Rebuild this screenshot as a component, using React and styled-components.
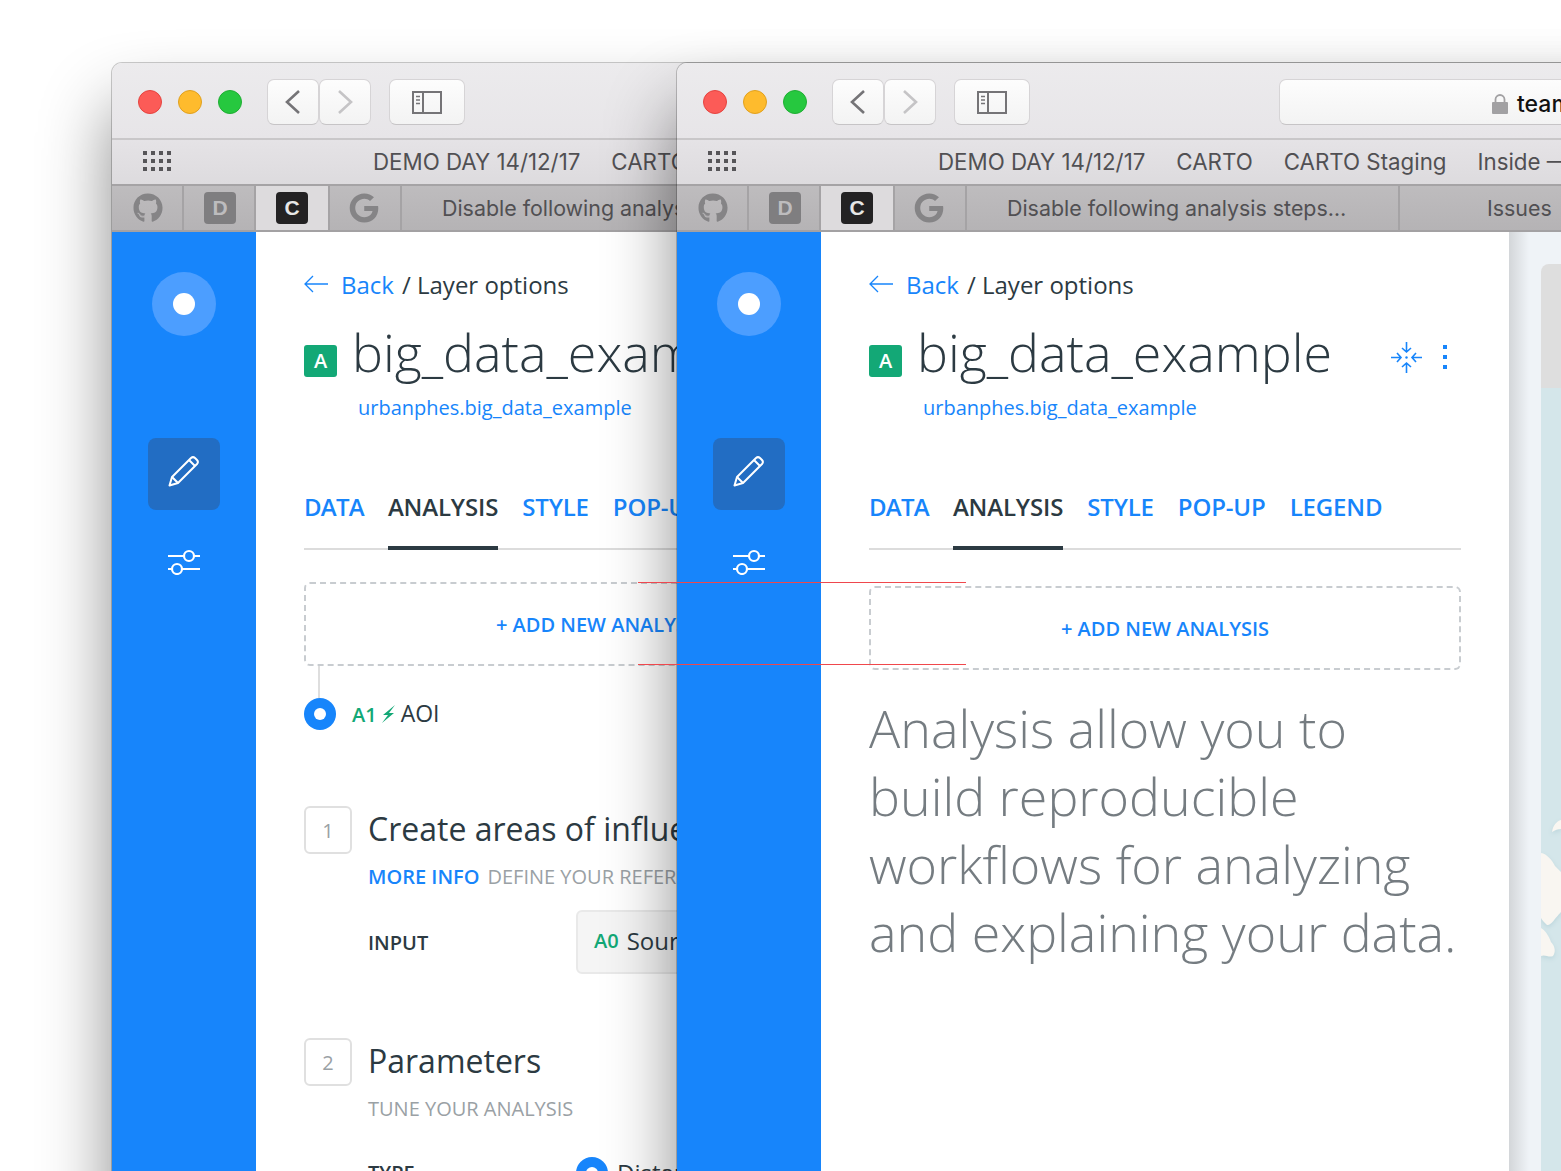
import React from "react";
import styled, { createGlobalStyle } from "styled-components";
import { FaGithub, FaGoogle } from "react-icons/fa";

const Global = createGlobalStyle`
  html, body { margin: 0; padding: 0; background: #fff; overflow: hidden; }
  * { box-sizing: border-box; }
`;

const BLUE = "#1785fb";
const DARK = "#2c3a42";
const GREEN = "#13a876";
const MUTED = "#9aa1a5";

const Stage = styled.div`
  position: relative;
  width: 1561px;
  height: 1171px;
  overflow: hidden;
  background: #fff;
  font-family: "Open Sans", sans-serif;
`;

const Win = styled.section`
  position: absolute;
  left: ${p => p.$left}px;
  top: 63px;
  width: 1600px;
  height: 1180px;
  display: flex;
  flex-direction: column;
  border-radius: 10px 10px 0 0;
  background: #fff;
  box-shadow: 0 44px 70px rgba(0, 0, 0, 0.46), 0 0 0 1px rgba(0, 0, 0, 0.2);
  overflow: hidden;
`;

const Toolbar = styled.div`
  height: 77px;
  flex: none;
  display: flex;
  align-items: flex-start;
  padding: 16px 0 0 26px;
  background: linear-gradient(#ecebed, #e7e5e8);
  border-bottom: 2px solid #c9c7c9;
`;

const Lights = styled.div`
  display: flex;
  gap: 16px;
  margin-top: 11px;
  margin-right: 25px;
`;

const Light = styled.span`
  width: 24px;
  height: 24px;
  border-radius: 50%;
  background: ${p => p.$fill};
  border: 1px solid ${p => p.$edge};
`;

const ToolBtn = styled.button`
  width: ${p => p.$w}px;
  height: 46px;
  flex: none;
  margin-right: ${p => p.$mr || 0}px;
  padding: 0;
  display: flex;
  align-items: center;
  justify-content: center;
  background: linear-gradient(#fdfdfd, #f3f3f3);
  border: 1px solid #d6d4d6;
  border-bottom-color: #c6c4c6;
  border-radius: 7px;
`;

const UrlBar = styled.div`
  width: 500px;
  height: 46px;
  flex: none;
  display: flex;
  align-items: center;
  padding: 3px 0 0 212px;
  gap: 9px;
  background: linear-gradient(#fdfdfd, #f3f3f3);
  border: 1px solid #d6d4d6;
  border-bottom-color: #c6c4c6;
  border-radius: 7px;
  margin-left: 249px;
  font-family: Inter, sans-serif;
  font-size: 23px;
  font-weight: 500;
  color: #111;
  white-space: nowrap;
`;

const BookmarkBar = styled.div`
  height: 46px;
  flex: none;
  display: flex;
  align-items: center;
  padding: 0 0 2px 31px;
  background: linear-gradient(#e5e3e6, #dddbde);
  border-bottom: 2px solid #a5a3a5;
  font-family: Inter, sans-serif;
  font-size: 22.3px;
  color: #515053;
  white-space: nowrap;
`;

const AppsGrid = styled.span`
  display: grid;
  grid-template-columns: repeat(4, 4px);
  grid-auto-rows: 4px;
  gap: 4px;
  margin-right: 202px;
  i { background: #565558; display: block; }
`;

const Bookmark = styled.span`
  margin-right: 31px;
`;

const TabBar = styled.div`
  height: 46px;
  flex: none;
  display: flex;
  background: linear-gradient(#bebcbe, #b5b3b5);
  border-bottom: 2px solid #a3a1a3;
  font-family: Inter, sans-serif;
  font-size: 21.4px;
  color: #515053;
  white-space: nowrap;
`;

const IconTab = styled.div`
  width: ${p => p.$w}px;
  flex: none;
  display: flex;
  align-items: center;
  justify-content: center;
  padding: ${p => p.$pad || "0"};
  border-right: 2px solid #a5a3a5;
  background: ${p => (p.$active ? "#dddbdd" : "transparent")};
  color: #858486;
  font-size: 30px;
`;

const TextTab = styled.div`
  width: ${p => p.$w}px;
  flex: none;
  display: flex;
  align-items: center;
  padding-left: ${p => p.$pad}px;
  border-right: 2px solid #a5a3a5;
`;

const FavBadge = styled.span`
  width: 32px;
  height: 32px;
  border-radius: 4px;
  display: flex;
  align-items: center;
  justify-content: center;
  background: ${p => p.$bg};
  color: ${p => p.$fg};
  font: 700 21px "Liberation Sans", sans-serif;
`;

const Body = styled.div`
  flex: 1;
  display: flex;
  min-height: 0;
`;

const Sidebar = styled.nav`
  width: 144px;
  flex: none;
  background: ${BLUE};
  display: flex;
  flex-direction: column;
  align-items: center;
  padding-top: 40px;
`;

const Logo = styled.div`
  width: 64px;
  height: 64px;
  border-radius: 50%;
  background: #4c9eff;
  display: flex;
  align-items: center;
  justify-content: center;
  margin-bottom: 102px;
  &::after {
    content: "";
    width: 22px;
    height: 22px;
    border-radius: 50%;
    background: #fff;
  }
`;

const NavItem = styled.div`
  width: 72px;
  height: 72px;
  margin-top: ${p => p.$mt || 0}px;
  border-radius: 8px;
  display: flex;
  align-items: center;
  justify-content: center;
  background: ${p => (p.$active ? "#226dc3" : "transparent")};
`;

const Panel = styled.main`
  width: 688px;
  flex: none;
  padding: 36px 48px 0;
  background: #fff;
`;

const Crumbs = styled.div`
  height: 32px;
  display: flex;
  align-items: center;
  font-size: 24px;
  color: ${DARK};
  white-space: nowrap;
`;

const BackLink = styled.span`
  color: ${BLUE};
  margin: 0 8px 0 13px;
`;

const TitleRow = styled.div`
  height: 72px;
  margin-top: 20px;
  display: flex;
  align-items: center;
  white-space: nowrap;
`;

const LetterBadge = styled.span`
  width: 33px;
  height: 32px;
  flex: none;
  margin-top: 9px;
  border-radius: 3px;
  background: ${GREEN};
  color: #fff;
  font-size: 20px;
  font-weight: 600;
  display: flex;
  align-items: center;
  justify-content: center;
`;

const Title = styled.h1`
  margin: -8px 0 0 15px;
  font-size: 52px;
  line-height: 72px;
  font-weight: 300;
  color: ${DARK};
`;

const TitleActions = styled.div`
  margin-left: auto;
  display: flex;
  align-items: center;
  gap: 21px;
  margin-right: 14px;
  margin-top: 2px;
`;

const Kebab = styled.span`
  display: grid;
  gap: 6px;
  i { width: 4px; height: 4px; background: ${BLUE}; display: block; }
`;

const Subtitle = styled.div`
  margin: 2px 0 0 54px;
  font-size: 20px;
  line-height: 28px;
  color: ${BLUE};
  white-space: nowrap;
`;

const Tabs = styled.div`
  height: 66px;
  margin-top: 62px;
  display: flex;
  gap: 24px;
  border-bottom: 2px solid #dcdcdc;
  white-space: nowrap;
`;

const TabLink = styled.div`
  height: 66px;
  line-height: 46px;
  font-size: 24px;
  font-weight: 600;
  letter-spacing: ${p => p.$track}px;
  color: ${p => (p.$active ? DARK : BLUE)};
  border-bottom: ${p => (p.$active ? `4px solid ${DARK}` : "none")};
`;

const AddBox = styled.div`
  height: 84px;
  margin-top: ${p => p.$mt}px;
  border: 2px dashed #c8ccd0;
  border-radius: 6px;
  display: flex;
  align-items: center;
  justify-content: center;
  font-size: 20px;
  font-weight: 600;
  color: ${BLUE};
  white-space: nowrap;
`;

const Connector = styled.div`
  width: 2px;
  height: 32px;
  margin-left: 14px;
  background: #dedede;
`;

const NodeRow = styled.div`
  height: 32px;
  display: flex;
  align-items: center;
`;

const Radio = styled.span`
  width: 32px;
  height: 32px;
  flex: none;
  border-radius: 50%;
  background: ${BLUE};
  display: flex;
  align-items: center;
  justify-content: center;
  &::after {
    content: "";
    width: 12px;
    height: 12px;
    border-radius: 50%;
    background: #fff;
  }
`;

const NodeCode = styled.span`
  color: ${GREEN};
  font-size: 20px;
  font-weight: 600;
  margin-left: 16px;
`;

const Code = styled.span`
  color: ${GREEN};
  font-size: 20px;
  font-weight: 600;
`;

const NodeName = styled.span`
  color: ${DARK};
  font-size: 23px;
  margin: -3px 0 0 3px;
`;

const Step = styled.div`
  margin-top: ${p => p.$mt}px;
  display: flex;
  align-items: center;
  gap: 16px;
  white-space: nowrap;
`;

const StepNum = styled.span`
  width: 48px;
  height: 48px;
  flex: none;
  border: 2px solid #e0e0e0;
  border-radius: 6px;
  display: flex;
  align-items: center;
  justify-content: center;
  font-size: 20px;
  color: ${MUTED};
`;

const StepTitle = styled.h2`
  margin: -4px 0 0;
  font-size: 32px;
  font-weight: 400;
  color: ${DARK};
`;

const StepHint = styled.div`
  margin: ${p => p.$mt}px 0 0 64px;
  font-size: 20px;
  line-height: 28px;
  color: ${MUTED};
  white-space: nowrap;
  b { color: ${BLUE}; font-weight: 600; margin-right: 8px; }
`;

const Field = styled.div`
  margin: ${p => p.$mt}px 0 0 64px;
  display: flex;
  align-items: center;
  white-space: nowrap;
`;

const FieldLabel = styled.span`
  width: 208px;
  font-size: 20px;
  font-weight: 600;
  color: ${DARK};
`;

const Select = styled.div`
  width: 300px;
  height: 64px;
  padding: 0 0 3px 16px;
  display: flex;
  align-items: center;
  gap: 8px;
  background: #f5f5f5;
  border: 2px solid #e9e9e9;
  border-radius: 6px;
  font-size: 24px;
  color: ${DARK};
`;

const RadioLabel = styled.span`
  margin-left: 9px;
  font-size: 24px;
  color: ${DARK};
`;

const Lead = styled.p`
  margin: 24px 0 0;
  font-size: 52px;
  line-height: 68px;
  font-weight: 300;
  color: #757c81;
`;

const Gutter = styled.aside`
  flex: 1;
  display: flex;
  padding: 32px 0 0 32px;
  background: linear-gradient(90deg, #d3d6d9 0, #eff3f7 20px);
`;

const MapPane = styled.div`
  flex: 1;
  position: relative;
  display: flex;
  flex-direction: column;
  border-radius: 8px 0 0 0;
  overflow: hidden;
`;

const MapHeader = styled.div`
  height: 124px;
  flex: none;
  background: #dedede;
`;

const Water = styled.div`
  flex: 1;
  background: #d4e6ea;
`;

const Land = styled.svg`
  position: absolute;
  left: 0;
  top: 124px;
  filter: drop-shadow(0 2px 2px #bcd6dc);
`;

const RedLine = styled.div`
  position: absolute;
  left: 638px;
  top: ${p => p.$top}px;
  width: 328px;
  height: 1px;
  background: #f0484c;
`;

const Chevron = ({ dir, color }) => (
  <svg width="18" height="26" viewBox="0 0 18 26" fill="none" stroke={color} strokeWidth="2.6">
    <path d={dir === "left" ? "M15 2 L3 13 L15 24" : "M3 2 L15 13 L3 24"} />
  </svg>
);

const SidebarIcon = () => (
  <svg width="30" height="23" viewBox="0 0 30 23" fill="none" stroke="#757477" strokeWidth="2">
    <rect x="1" y="1" width="28" height="21" />
    <path d="M11 1 V22" />
    <path d="M4 5.500 H8 M4 9 H8 M4 12.500 H8" strokeWidth="1.500" />
  </svg>
);

const Lock = () => (
  <svg width="16" height="20" viewBox="0 0 16 20">
    <path d="M3.500 9 V5.500 a4.500 4.500 0 0 1 9 0 V9" fill="none" stroke="#a2a1a3" strokeWidth="1.800" />
    <rect y="8" width="16" height="12" rx="1" fill="#a2a1a3" />
  </svg>
);

const BackArrow = () => (
  <svg width="24" height="18" viewBox="0 0 24 18" fill="none" stroke={BLUE} strokeWidth="1.300">
    <path d="M24 9 H1 M9 1 L1 9 L9 17" />
  </svg>
);

const Pencil = () => (
  <svg width="32" height="32" viewBox="0 0 32 32" fill="none" stroke="#fff" strokeWidth="2" strokeLinejoin="round" style={{ marginBottom: 6 }}>
    <path d="M1.500 30.500 L4 22 L23 3 a3 3 0 0 1 4 0 L29 5 a3 3 0 0 1 0 4 L10 28 Z" />
    <path d="M4 22 L10 28 M21 5 L27 11" />
  </svg>
);

const Sliders = () => (
  <svg width="32" height="26" viewBox="0 0 32 26" fill="none" stroke="#fff" strokeWidth="2.200">
    <path d="M0 7 H16 M26 7 H32 M0 20 H4 M14 20 H32" />
    <circle cx="21" cy="7" r="5" />
    <circle cx="9" cy="20" r="5" />
  </svg>
);

const Collapse = () => (
  <svg width="31" height="31" viewBox="0 0 31 31" fill="none" stroke={BLUE} strokeWidth="1.600">
    <path d="M15.500 0 V10 M11 6 L15.500 10 L20 6" />
    <path d="M15.500 31 V21 M11 25 L15.500 21 L20 25" />
    <path d="M0 15.500 H10 M6 11 L10 15.500 L6 20" />
    <path d="M31 15.500 H21 M25 11 L21 15.500 L25 20" />
    <circle cx="15.500" cy="15.500" r="1.200" fill={BLUE} stroke="none" />
  </svg>
);

const Bolt = () => (
  <svg width="13" height="18" viewBox="0 0 13 18" style={{ margin: "0 3px 0 5px" }}>
    <path d="M13 0 L1 10 L6 10 L0 18 L12 8 L7 8 Z" fill={GREEN} />
  </svg>
);

const Chrome = ({ url }) => (
  <>
    <Toolbar>
      <Lights>
        <Light $fill="#fc5b57" $edge="#e5433f" />
        <Light $fill="#febb2d" $edge="#e0a01e" />
        <Light $fill="#26c83f" $edge="#1fae33" />
      </Lights>
      <ToolBtn $w={52}><Chevron dir="left" color="#757477" /></ToolBtn>
      <ToolBtn $w={52} $mr={18}><Chevron dir="right" color="#c5c4c6" /></ToolBtn>
      <ToolBtn $w={76}><SidebarIcon /></ToolBtn>
      <UrlBar><Lock />{url}</UrlBar>
    </Toolbar>
    <BookmarkBar>
      <AppsGrid>{Array.from({ length: 12 }, (_, i) => <i key={i} />)}</AppsGrid>
      <Bookmark>DEMO DAY 14/12/17</Bookmark>
      <Bookmark>CARTO</Bookmark>
      <Bookmark>CARTO Staging</Bookmark>
      <Bookmark>Inside — CARTO</Bookmark>
    </BookmarkBar>
    <TabBar>
      <IconTab $w={72} $pad="0 0 0 2px"><FaGithub /></IconTab>
      <IconTab $w={72} $pad="0 0 0 2px"><FavBadge $bg="#7f7e80" $fg="#bdbcbe">D</FavBadge></IconTab>
      <IconTab $w={74} $active><FavBadge $bg="#232223" $fg="#e6e6e6">C</FavBadge></IconTab>
      <IconTab $w={72} $pad="0 2px 0 0"><FaGoogle /></IconTab>
      <TextTab $w={433} $pad={40}>Disable following analysis steps…</TextTab>
      <TextTab $w={300} $pad={87}>Issues</TextTab>
    </TabBar>
  </>
);

const Rail = () => (
  <Sidebar>
    <Logo />
    <NavItem $active><Pencil /></NavItem>
    <NavItem $mt={16}><Sliders /></NavItem>
  </Sidebar>
);

const TAB_ITEMS = [
  { label: "DATA", track: -0.75 },
  { label: "ANALYSIS", track: -0.15 },
  { label: "STYLE", track: -0.15 },
  { label: "POP-UP", track: -0.15 },
  { label: "LEGEND", track: -0.15 },
];

const Head = ({ active = "ANALYSIS" }) => (
  <>
    <Crumbs><BackArrow /><BackLink>Back</BackLink>/ Layer options</Crumbs>
    <TitleRow>
      <LetterBadge>A</LetterBadge>
      <Title>big_data_example</Title>
      <TitleActions>
        <Collapse />
        <Kebab><i /><i /><i /></Kebab>
      </TitleActions>
    </TitleRow>
    <Subtitle>urbanphes.big_data_example</Subtitle>
    <Tabs>
      {TAB_ITEMS.map(t => (
        <TabLink key={t.label} $track={t.track} $active={t.label === active}>{t.label}</TabLink>
      ))}
    </Tabs>
  </>
);

const MapArea = () => (
  <Gutter>
    <MapPane>
      <MapHeader />
      <Water />
      <Land width="20" height="600" viewBox="0 0 20 600">
        <path d="M11 444 C12 437 16 433 20 432 V441 C17 441 14 442 11 444 Z" fill="#f9f6f1" />
        <path d="M0 465 C6 466 11 472 14 478 L20 484 V524 C14 530 10 538 6 537 C3 534 1 532 0 530 Z" fill="#f9f6f1" />
        <path d="M0 540 C4 542 8 548 10 554 C14 558 15 564 12 568 C8 570 4 566 0 568 Z" fill="#f9f6f1" />
      </Land>
    </MapPane>
  </Gutter>
);

export default function App() {
  return (
    <Stage>
      <Global />
      <Win $left={112}>
        <Chrome url="team.carto.com" />
        <Body>
          <Rail />
          <Panel>
            <Head />
            <AddBox $mt={32}>+ ADD NEW ANALYSIS</AddBox>
            <Connector />
            <NodeRow>
              <Radio />
              <NodeCode>A1</NodeCode>
              <Bolt />
              <NodeName>AOI</NodeName>
            </NodeRow>
            <Step $mt={76}>
              <StepNum>1</StepNum>
              <StepTitle>Create areas of influence</StepTitle>
            </Step>
            <StepHint $mt={9}><b>MORE INFO</b>DEFINE YOUR REFERENCE LAYER</StepHint>
            <Field $mt={19}>
              <FieldLabel>INPUT</FieldLabel>
              <Select><Code>A0</Code>Source</Select>
            </Field>
            <Step $mt={64}>
              <StepNum>2</StepNum>
              <StepTitle>Parameters</StepTitle>
            </Step>
            <StepHint $mt={9}>TUNE YOUR ANALYSIS</StepHint>
            <Field $mt={33}>
              <FieldLabel>TYPE</FieldLabel>
              <Radio />
              <RadioLabel>Distance</RadioLabel>
            </Field>
          </Panel>
          <MapArea />
        </Body>
      </Win>
      <Win $left={677}>
        <Chrome url="team.carto.com" />
        <Body>
          <Rail />
          <Panel>
            <Head />
            <AddBox $mt={36}>+ ADD NEW ANALYSIS</AddBox>
            <Lead>Analysis allow you to build reproducible workflows for analyzing and explaining your data.</Lead>
          </Panel>
          <MapArea />
        </Body>
      </Win>
      <RedLine $top={582} />
      <RedLine $top={664} />
    </Stage>
  );
}
